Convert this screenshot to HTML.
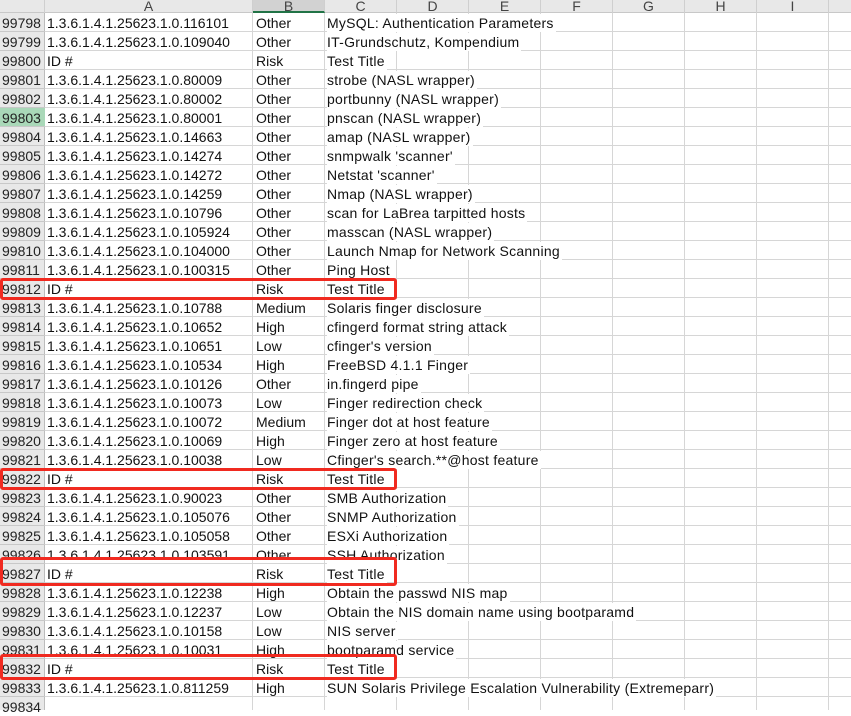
<!DOCTYPE html>
<html><head><meta charset="utf-8"><style>
*{margin:0;padding:0;box-sizing:border-box}
body{width:851px;height:710px;overflow:hidden;background:#fff;position:relative;font-family:"Liberation Sans","Noto Sans CJK SC",sans-serif;font-size:14px;color:#111}
.hdr{position:absolute;top:0;left:0;width:851px;height:13px;background:#e8e8e8;border-bottom:1px solid #c8c8c8}
.ch{position:absolute;top:0;height:13px;font-size:14px;line-height:12px;text-align:center;color:#444;border-right:1px solid #cfcfcf;overflow:hidden}
.rh{position:absolute;left:0;width:45px;top:13px;height:697px;background:#e8e8e8;border-right:1px solid #bdbdbd}
.grid{position:absolute;left:45px;top:13px;width:806px;height:697px;background:repeating-linear-gradient(to bottom,transparent 0 18px,#d6d6d6 18px 19px)}
.v{position:absolute;top:13px;height:697px;width:1px;background:#d6d6d6}
.rhl{position:absolute;left:0;top:13px;width:45px;height:697px;background:repeating-linear-gradient(to bottom,transparent 0 18px,#c8c8c8 18px 19px)}
.r{position:absolute;left:0;height:19px;width:851px;line-height:19px;white-space:nowrap}
.r span{position:absolute;top:1px;line-height:18px}
.n{left:2px;color:#222}
.a{left:47px}.b{left:256px}.c{left:327px;background:#fff;padding-right:2px;letter-spacing:0.25px}
.box{position:absolute;left:0;width:397px;border:3px solid #f02a20;border-radius:3px}
</style></head><body>
<div class="hdr"></div>
<div class="ch" style="left:0;width:45px"></div>
<div class="ch" style="left:45px;width:208px">A</div>
<div class="ch" style="left:253px;width:72px;background:#d2d2d2;border-bottom:2px solid #217346">B</div>
<div class="ch" style="left:325px;width:72px">C</div>
<div class="ch" style="left:397px;width:72px">D</div>
<div class="ch" style="left:469px;width:72px">E</div>
<div class="ch" style="left:541px;width:72px">F</div>
<div class="ch" style="left:613px;width:72px">G</div>
<div class="ch" style="left:685px;width:72px">H</div>
<div class="ch" style="left:757px;width:72px">I</div>
<div class="rh"></div>
<div style="position:absolute;left:0;top:108px;width:45px;height:18px;background:#a9d8b8"></div>
<div class="rhl"></div>
<div class="grid"></div>
<div class="v" style="left:252px"></div><div class="v" style="left:324px"></div><div class="v" style="left:396px"></div><div class="v" style="left:468px"></div><div class="v" style="left:540px"></div><div class="v" style="left:612px"></div><div class="v" style="left:684px"></div><div class="v" style="left:756px"></div><div class="v" style="left:828px"></div>

<div class="r" style="top:13px"><span class="n">99798</span><span class="a">1.3.6.1.4.1.25623.1.0.116101</span><span class="b">Other</span><span class="c">MySQL: Authentication Parameters</span></div>
<div class="r" style="top:32px"><span class="n">99799</span><span class="a">1.3.6.1.4.1.25623.1.0.109040</span><span class="b">Other</span><span class="c">IT-Grundschutz, Kompendium</span></div>
<div class="r" style="top:51px"><span class="n">99800</span><span class="a">ID #</span><span class="b">Risk</span><span class="c">Test Title</span></div>
<div class="r" style="top:70px"><span class="n">99801</span><span class="a">1.3.6.1.4.1.25623.1.0.80009</span><span class="b">Other</span><span class="c">strobe (NASL wrapper)</span></div>
<div class="r" style="top:89px"><span class="n">99802</span><span class="a">1.3.6.1.4.1.25623.1.0.80002</span><span class="b">Other</span><span class="c">portbunny (NASL wrapper)</span></div>
<div class="r" style="top:108px"><span class="n">99803</span><span class="a">1.3.6.1.4.1.25623.1.0.80001</span><span class="b">Other</span><span class="c">pnscan (NASL wrapper)</span></div>
<div class="r" style="top:127px"><span class="n">99804</span><span class="a">1.3.6.1.4.1.25623.1.0.14663</span><span class="b">Other</span><span class="c">amap (NASL wrapper)</span></div>
<div class="r" style="top:146px"><span class="n">99805</span><span class="a">1.3.6.1.4.1.25623.1.0.14274</span><span class="b">Other</span><span class="c">snmpwalk 'scanner'</span></div>
<div class="r" style="top:165px"><span class="n">99806</span><span class="a">1.3.6.1.4.1.25623.1.0.14272</span><span class="b">Other</span><span class="c">Netstat 'scanner'</span></div>
<div class="r" style="top:184px"><span class="n">99807</span><span class="a">1.3.6.1.4.1.25623.1.0.14259</span><span class="b">Other</span><span class="c">Nmap (NASL wrapper)</span></div>
<div class="r" style="top:203px"><span class="n">99808</span><span class="a">1.3.6.1.4.1.25623.1.0.10796</span><span class="b">Other</span><span class="c">scan for LaBrea tarpitted hosts</span></div>
<div class="r" style="top:222px"><span class="n">99809</span><span class="a">1.3.6.1.4.1.25623.1.0.105924</span><span class="b">Other</span><span class="c">masscan (NASL wrapper)</span></div>
<div class="r" style="top:241px"><span class="n">99810</span><span class="a">1.3.6.1.4.1.25623.1.0.104000</span><span class="b">Other</span><span class="c">Launch Nmap for Network Scanning</span></div>
<div class="r" style="top:260px"><span class="n">99811</span><span class="a">1.3.6.1.4.1.25623.1.0.100315</span><span class="b">Other</span><span class="c">Ping Host</span></div>
<div class="r" style="top:279px"><span class="n">99812</span><span class="a">ID #</span><span class="b">Risk</span><span class="c">Test Title</span></div>
<div class="r" style="top:298px"><span class="n">99813</span><span class="a">1.3.6.1.4.1.25623.1.0.10788</span><span class="b">Medium</span><span class="c">Solaris finger disclosure</span></div>
<div class="r" style="top:317px"><span class="n">99814</span><span class="a">1.3.6.1.4.1.25623.1.0.10652</span><span class="b">High</span><span class="c">cfingerd format string attack</span></div>
<div class="r" style="top:336px"><span class="n">99815</span><span class="a">1.3.6.1.4.1.25623.1.0.10651</span><span class="b">Low</span><span class="c">cfinger's version</span></div>
<div class="r" style="top:355px"><span class="n">99816</span><span class="a">1.3.6.1.4.1.25623.1.0.10534</span><span class="b">High</span><span class="c">FreeBSD 4.1.1 Finger</span></div>
<div class="r" style="top:374px"><span class="n">99817</span><span class="a">1.3.6.1.4.1.25623.1.0.10126</span><span class="b">Other</span><span class="c">in.fingerd pipe</span></div>
<div class="r" style="top:393px"><span class="n">99818</span><span class="a">1.3.6.1.4.1.25623.1.0.10073</span><span class="b">Low</span><span class="c">Finger redirection check</span></div>
<div class="r" style="top:412px"><span class="n">99819</span><span class="a">1.3.6.1.4.1.25623.1.0.10072</span><span class="b">Medium</span><span class="c">Finger dot at host feature</span></div>
<div class="r" style="top:431px"><span class="n">99820</span><span class="a">1.3.6.1.4.1.25623.1.0.10069</span><span class="b">High</span><span class="c">Finger zero at host feature</span></div>
<div class="r" style="top:450px"><span class="n">99821</span><span class="a">1.3.6.1.4.1.25623.1.0.10038</span><span class="b">Low</span><span class="c">Cfinger's search.**@host feature</span></div>
<div class="r" style="top:469px"><span class="n">99822</span><span class="a">ID #</span><span class="b">Risk</span><span class="c">Test Title</span></div>
<div class="r" style="top:488px"><span class="n">99823</span><span class="a">1.3.6.1.4.1.25623.1.0.90023</span><span class="b">Other</span><span class="c">SMB Authorization</span></div>
<div class="r" style="top:507px"><span class="n">99824</span><span class="a">1.3.6.1.4.1.25623.1.0.105076</span><span class="b">Other</span><span class="c">SNMP Authorization</span></div>
<div class="r" style="top:526px"><span class="n">99825</span><span class="a">1.3.6.1.4.1.25623.1.0.105058</span><span class="b">Other</span><span class="c">ESXi Authorization</span></div>
<div class="r" style="top:545px"><span class="n">99826</span><span class="a">1.3.6.1.4.1.25623.1.0.103591</span><span class="b">Other</span><span class="c">SSH Authorization</span></div>
<div class="r" style="top:564px"><span class="n">99827</span><span class="a">ID #</span><span class="b">Risk</span><span class="c">Test Title</span></div>
<div class="r" style="top:583px"><span class="n">99828</span><span class="a">1.3.6.1.4.1.25623.1.0.12238</span><span class="b">High</span><span class="c">Obtain the passwd NIS map</span></div>
<div class="r" style="top:602px"><span class="n">99829</span><span class="a">1.3.6.1.4.1.25623.1.0.12237</span><span class="b">Low</span><span class="c">Obtain the NIS domain name using bootparamd</span></div>
<div class="r" style="top:621px"><span class="n">99830</span><span class="a">1.3.6.1.4.1.25623.1.0.10158</span><span class="b">Low</span><span class="c">NIS server</span></div>
<div class="r" style="top:640px"><span class="n">99831</span><span class="a">1.3.6.1.4.1.25623.1.0.10031</span><span class="b">High</span><span class="c">bootparamd service</span></div>
<div class="r" style="top:659px"><span class="n">99832</span><span class="a">ID #</span><span class="b">Risk</span><span class="c">Test Title</span></div>
<div class="r" style="top:678px"><span class="n">99833</span><span class="a">1.3.6.1.4.1.25623.1.0.811259</span><span class="b">High</span><span class="c">SUN Solaris Privilege Escalation Vulnerability (Extremeparr)</span></div>
<div class="r" style="top:697px"><span class="n">99834</span></div>

<div class="box" style="top:278px;height:22px"></div>
<div class="box" style="top:468px;height:22px"></div>
<div class="box" style="top:557px;height:29px"></div>
<div class="box" style="top:654px;height:26px"></div>
</body></html>
